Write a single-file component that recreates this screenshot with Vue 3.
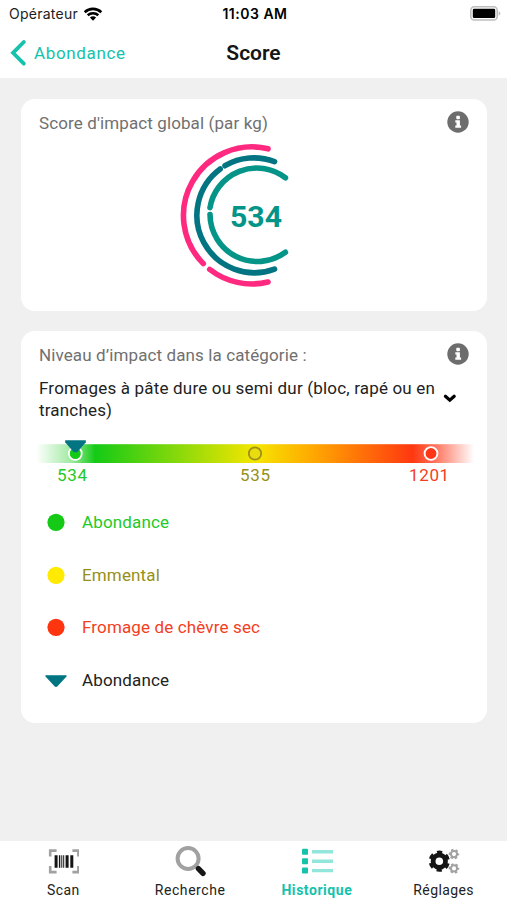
<template>
  <div class="screen">
    <div class="status-bar">
      <div class="status-carrier">
        <span>Opérateur</span>
        <svg width="20" height="14" viewBox="0 0 20 14">
          <path d="M1.7 5.2A12 12 0 0 1 18.3 5.2M4.7 8.3a7.8 7.8 0 0 1 10.6 0" fill="none" stroke="#000" stroke-width="2.6" />
          <path d="M6.9 10.6a4.6 4.6 0 0 1 6.2 0L10 13.8z" />
        </svg>
      </div>
      <span class="status-time">11:03 AM</span>
      <svg class="status-battery" width="31" height="15" viewBox="0 0 31 15">
        <rect x="0.8" y="0.8" width="26.4" height="13.2" rx="3.6" fill="#fff" stroke="#bdbdbd" stroke-width="1.6" />
        <rect x="2.8" y="2.8" width="22.4" height="9.2" rx="1.2" />
        <path d="M28.6 5.3c2.3.8 2.3 3.6 0 4.4z" fill="#bdbdbd" />
      </svg>
    </div>

    <header class="nav-bar">
      <div class="nav-back">
        <svg width="16" height="26" viewBox="0 0 16 26">
          <path d="M13.8 2 3 12.8l10.8 10.8" fill="none" stroke="#15c2ac" stroke-width="3.8" stroke-linecap="round" />
        </svg>
        <span>Abondance</span>
      </div>
      <h1 class="nav-title">Score</h1>
      <div></div>
    </header>

    <main class="content">
      <section class="card card-score">
        <div class="card-header">
          <h2 class="card-title">Score d'impact global (par kg)</h2>
          <svg class="info-icon" viewBox="0 0 22 22">
            <circle cx="11" cy="11" r="10.7" />
            <rect x="9.3" y="4.8" width="3.6" height="3.4" rx="0.8" />
            <path d="M8.3 9.3h4.6v5.2h1.2v2.3H8.3v-2.3h1.2v-2.9H8.3z" />
          </svg>
        </div>
        <svg class="gauge" width="114" height="144" viewBox="180 143 114 144">
          <g fill="none" stroke-width="5.6" stroke-linecap="round">
            <path d="M268 148.8A68.5 68.5 0 0 0 203.3 263.6M209.7 269.4A68.5 68.5 0 0 0 268 282" stroke="#ff2a80" />
            <path d="M274.5 161.6A57.5 57.5 0 0 0 225 165.7M220.2 169A57.5 57.5 0 0 0 274.5 269.1" stroke="#037582" />
            <path d="M285.4 177.8A47.3 47.3 0 0 0 210 207.6M210 214.6A47.3 47.3 0 0 0 285.4 252.3" stroke="#059488" />
          </g>
          <text x="256" y="227" text-anchor="middle" textLength="52" lengthAdjust="spacingAndGlyphs" class="gauge-value">534</text>
        </svg>
      </section>

      <section class="card card-category">
        <div class="card-header">
          <h2 class="card-title">Niveau d’impact dans la catégorie :</h2>
          <svg class="info-icon" viewBox="0 0 22 22">
            <circle cx="11" cy="11" r="10.7" />
            <rect x="9.3" y="4.8" width="3.6" height="3.4" rx="0.8" />
            <path d="M8.3 9.3h4.6v5.2h1.2v2.3H8.3v-2.3h1.2v-2.9H8.3z" />
          </svg>
        </div>
        <div class="category">
          <p class="category-name">Fromages à pâte dure ou semi dur (bloc, rapé ou en<br />tranches)</p>
          <svg width="14" height="10" viewBox="0 0 14 10">
            <path d="M2.4 2.3 6.8 6.2l4.4-3.9" fill="none" stroke="#000" stroke-width="3.2" stroke-linecap="round" />
          </svg>
        </div>

        <div class="scale">
          <svg width="438" height="26" viewBox="36 439 438 26">
            <defs>
              <linearGradient id="scale-color">
                <stop offset="0" stop-color="#14ca16" stop-opacity="0" />
                <stop offset="0.08" stop-color="#14ca16" stop-opacity="0.4" />
                <stop offset="0.135" stop-color="#14ca16" />
                <stop offset="0.5" stop-color="#f5e600" />
                <stop offset="0.62" stop-color="#ffae00" />
                <stop offset="0.86" stop-color="#ff3810" />
                <stop offset="0.91" stop-color="#ff3515" stop-opacity="0.7" />
                <stop offset="1" stop-color="#ff3515" stop-opacity="0" />
              </linearGradient>
            </defs>
            <rect x="36" y="444.2" width="438" height="18.8" fill="url(#scale-color)" />
            <circle cx="75.3" cy="453.5" r="6.4" fill="#14ca16" stroke="#fff" stroke-width="1.8" />
            <path d="M65.2 440.2h20.6v2l-8.6 10h-3.4l-8.6-10z" fill="#037582" />
            <circle cx="255" cy="453.5" r="6.2" fill="#e9dc10" stroke="#9c9218" stroke-width="1.8" />
            <circle cx="431" cy="453.5" r="6.4" fill="#ff3515" stroke="#fff" stroke-width="1.9" />
          </svg>
          <div class="scale-labels">
            <span class="green">534</span>
            <span class="olive">535</span>
            <span class="red">1201</span>
          </div>
        </div>

        <ul class="legend">
          <li v-for="item in legend" :key="item.id">
            <svg width="22" height="18" viewBox="0 0 22 18">
              <path v-if="item.marker" d="M1 4.2h20c.9 0 1 .8.5 1.3l-9 9.8c-.8.9-2.2.9-3 0L.5 5.5C0 5 .1 4.2 1 4.2z" fill="#037582" />
              <circle v-else cx="11" cy="9.3" r="8.6" :fill="item.color" />
            </svg>
            <span :class="item.tone">{{ item.label }}</span>
          </li>
        </ul>
      </section>
    </main>

    <nav class="tab-bar">
      <div class="tab">
        <svg width="32" height="32" viewBox="0 0 32 32">
          <path d="M9.6 5.6H3.2v6M25.4 5.6h6v6M9.6 27.1H3.2v-6M25.4 27.1h6v-6" fill="none" stroke="#a1a1a1" stroke-width="2.6" />
          <path d="M7.6 10.2h3v12.5h-3zM11.9 10.2h1.4v12.5h-1.4zM14.3 10.2h1v12.5h-1zM16.2 10.2h1v12.5h-1zM18.6 10.2h3v12.5h-3zM23.3 10.2h3v12.5h-3z" fill="#151515" />
        </svg>
        <span class="label-scan">Scan</span>
      </div>
      <div class="tab">
        <svg width="32" height="32" viewBox="0 0 32 32">
          <circle cx="14.1" cy="13.5" r="10.5" fill="none" stroke="#a1a1a1" stroke-width="4" />
          <path d="m24.4 23.6 4.6 4.7" stroke="#151515" stroke-width="5.4" stroke-linecap="round" />
        </svg>
        <span class="label-search">Recherche</span>
      </div>
      <div class="tab tab-active">
        <svg width="32" height="32" viewBox="0 0 32 32">
          <path d="M11 5.1h21v3.4H11zM11 14.5h21v3.4H11zM11 23.9h21v3.4H11z" fill="#93e6dc" />
          <g fill="#15c2ac">
            <rect x="1" y="3.8" width="6" height="6" rx="1" />
            <rect x="1" y="13.2" width="6" height="6" rx="1" />
            <rect x="1" y="22.6" width="6" height="6" rx="1" />
          </g>
        </svg>
        <span class="label-history">Historique</span>
      </div>
      <div class="tab">
        <svg width="32" height="32" viewBox="0 0 32 32">
          <g fill="none">
            <g stroke="#151515">
              <circle cx="11.3" cy="16.2" r="6.2" stroke-width="4.8" />
              <circle cx="11.3" cy="16.2" r="9.1" stroke-width="3" stroke-dasharray="5.2 4.33" stroke-dashoffset="-2.17" />
            </g>
            <g stroke="#a1a1a1">
              <circle cx="26" cy="9.1" r="3.1" stroke-width="2.1" />
              <circle cx="26" cy="9.1" r="4.5" stroke-width="1.6" stroke-dasharray="2.5 2.21" stroke-dashoffset="1.25" />
              <circle cx="26" cy="23.4" r="3.1" stroke-width="2.1" />
              <circle cx="26" cy="23.4" r="4.5" stroke-width="1.6" stroke-dasharray="2.5 2.21" stroke-dashoffset="1.25" />
            </g>
          </g>
        </svg>
        <span class="label-settings">Réglages</span>
      </div>
    </nav>
  </div>
</template>

<script setup>
const legend = [
  { id: 1, label: 'Abondance', color: '#14ca16', tone: 'green' },
  { id: 2, label: 'Emmental', color: '#ffea00', tone: 'olive' },
  { id: 3, label: 'Fromage de chèvre sec', color: '#ff3510', tone: 'red' },
  { id: 4, label: 'Abondance', marker: true, tone: 'dark' }
]
</script>

<style>
body {
  margin: 0;
  background: #f0f0f0;
}
</style>

<style scoped>
.screen {
  display: flex;
  flex-direction: column;
  width: 507px;
  height: 900px;
  overflow: hidden;
  background: #f0f0f0;
  color: #222;
  font-family: Roboto, "Liberation Sans", sans-serif;
  font-size: 17px;
  box-sizing: border-box;
}

h1,
h2,
p,
ul {
  margin: 0;
  padding: 0;
}

svg {
  display: block;
  flex: none;
}

.status-bar {
  display: grid;
  grid-template-columns: 1fr auto 1fr;
  align-items: center;
  height: 27px;
  padding: 0 6px 0 9px;
  background: #fff;
  font-family: Inter, sans-serif;
  font-size: 14px;
}

.status-carrier {
  display: flex;
  align-items: center;
  gap: 5px;
  letter-spacing: 0.25px;
}

.status-time {
  color: #000;
  font-weight: 600;
  letter-spacing: 0.5px;
}

.status-battery {
  justify-self: end;
}

.nav-bar {
  display: grid;
  grid-template-columns: 1fr auto 1fr;
  align-items: center;
  height: 51px;
  padding: 0 10px;
  background: #fff;
}

.nav-back {
  display: flex;
  align-items: center;
  gap: 8px;
  color: #15c2ac;
  letter-spacing: 0.65px;
}

.nav-title {
  color: #151515;
  font-size: 21px;
  font-weight: 600;
}

.content {
  display: flex;
  flex: 1;
  flex-direction: column;
  gap: 20px;
  padding: 21px 20px 0 21px;
}

.card {
  box-sizing: border-box;
  padding: 12px 18px 0;
  border-radius: 14px;
  background: #fff;
}

.card-score {
  height: 212px;
}

.card-category {
  height: 392px;
}

.card-header {
  display: flex;
  align-items: center;
  justify-content: space-between;
  height: 22px;
}

.card-title {
  padding-top: 2px;
  color: #707070;
  font-size: 17px;
  font-weight: 400;
  letter-spacing: 0.11px;
  white-space: nowrap;
}

.info-icon {
  width: 22px;
  height: 22px;
  fill: #fff;
}

.info-icon circle {
  fill: #6d6d6d;
}

.gauge {
  margin: 10px 0 0 141px;
}

.gauge-value {
  fill: #059488;
  font-size: 30px;
  font-weight: 700;
}

.category {
  display: flex;
  align-items: center;
  gap: 7px;
  margin-top: 12px;
}

.category-name {
  width: 397px;
  letter-spacing: 0.18px;
  line-height: 22px;
  white-space: nowrap;
}

.scale {
  margin: 18px -5px 0 -3px;
}

.scale-labels {
  display: grid;
  grid-template-columns: 183px 169px auto;
  padding-left: 21px;
  letter-spacing: 0.65px;
  line-height: 20px;
}

.green {
  color: #23c928;
}

.olive {
  color: #978f18;
}

.red {
  color: #f43e23;
}

.legend {
  display: flex;
  flex-direction: column;
  gap: 30.5px;
  margin-top: 26px;
  padding-left: 5.5px;
  list-style: none;
}

.legend li {
  display: flex;
  align-items: center;
  gap: 15.5px;
  height: 22px;
  letter-spacing: 0.14px;
}

.tab-bar {
  display: grid;
  grid-template-columns: repeat(4, 1fr);
  height: 59px;
  background: #fff;
}

.tab {
  display: flex;
  align-items: center;
  flex-direction: column;
  gap: 5.5px;
  padding-top: 3.5px;
  font-size: 14px;
  line-height: 16px;
}

.tab-active {
  color: #15c2ac;
  font-weight: 700;
}

.label-scan,
.label-settings {
  letter-spacing: 0.4px;
}

.label-search,
.label-history {
  letter-spacing: 0.55px;
}
</style>
